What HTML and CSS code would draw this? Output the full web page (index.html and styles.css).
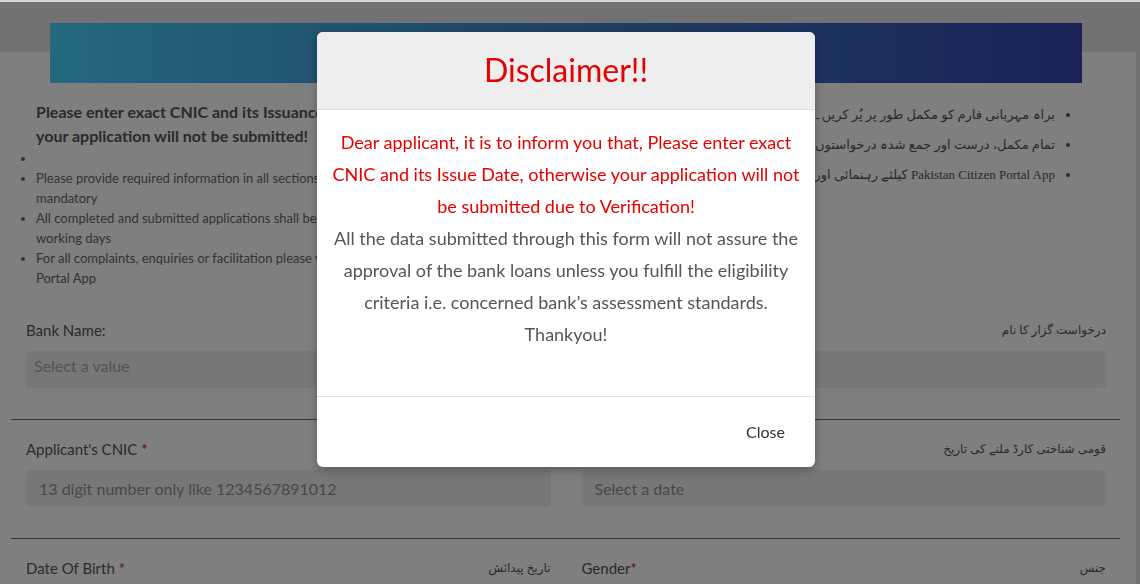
FILE: index.html
```html
<!DOCTYPE html>
<html>

<head>
	<meta charset="utf-8">
	<title>Loan application</title>
	<link rel="stylesheet" href="styles.css">
</head>

<body>

	<div class="page">
		<header class="banner"></header>

		<section class="notes">
			<div class="notesEn">
				<p class="warning">Please enter exact CNIC and its Issuance Date, otherwise<br>your application will not be submitted!</p>
				<ul>
					<li></li>
					<li>Please provide required information in all sections, fields marked with * are<br>mandatory</li>
					<li>All completed and submitted applications shall be processed within 30<br>working days</li>
					<li>For all complaints, enquiries or facilitation please visit Pakistan Citizen<br>Portal App</li>
				</ul>
			</div>
			<div class="notesUr" dir="rtl">
				<ul>
					<li>براہ مہربانی فارم کو مکمل طور پر پُر کریں۔ تمام خانے پُر کرنا لازمی ہیں</li>
					<li>تمام مکمل، درست اور جمع شدہ درخواستوں پر فیصلہ تیس دن میں کیا جائے گا</li>
					<li>Pakistan Citizen Portal App کیلئے رہنمائی اور معلومات حاصل کریں</li>
				</ul>
			</div>
		</section>

		<form class="form">
			<div class="field wide">
				<div class="label"><span>Bank Name:</span><span class="ur">درخواست گزار کا نام</span></div>
				<div class="select">Select a value</div>
			</div>

			<hr>

			<div class="field">
				<div class="label"><span>Applicant's CNIC <b>*</b></span></div>
				<div class="input">13 digit number only like 1234567891012</div>
			</div>
			<div class="field">
				<div class="label"><span>CNIC Issue Date <b>*</b></span><span class="ur">قومی شناختی کارڈ ملنے کی تاریخ</span></div>
				<div class="input">Select a date</div>
			</div>

			<hr>

			<div class="field">
				<div class="label"><span>Date Of Birth <b>*</b></span><span class="ur">تاریخ پیدائش</span></div>
				<div class="input"></div>
			</div>
			<div class="field">
				<div class="label"><span>Gender<b>*</b></span><span class="ur">جنس</span></div>
				<div class="input"></div>
			</div>
		</form>
	</div>

	<div class="backdrop"></div>

	<div class="modal">
		<div class="modalHeader">
			<h2>Disclaimer!!</h2>
		</div>
		<div class="modalBody">
			<p class="red">Dear applicant, it is to inform you that, Please enter exact CNIC and its Issue Date, otherwise your application will not be submitted due to Verification!</p>
			<p>All the data submitted through this form will not assure the approval of the bank loans unless you fulfill the eligibility criteria i.e. concerned bank’s assessment standards. Thankyou!</p>
		</div>
		<div class="modalFooter">
			<button type="button">Close</button>
		</div>
	</div>

</body>

</html>
```

FILE: styles.css
```css
body {
	margin: 0;
	border-top: 2px solid #d6d6d6;
	background-color: #e4e4e4;
	font-family: Lato, "Liberation Sans", sans-serif;
	color: #555;
	overflow: hidden;
}

.page {
	width: 1136px;
	background: linear-gradient(#e4e4e4 50px, #fff 50px);
	padding-top: 21px;
	padding-bottom: 40px;
}

.banner {
	height: 60px;
	margin: 0 54px 0 50px;
	background: linear-gradient(to right, #48d2ff, #3e7cc4 55%, #3444ae);
}

/* notes */

.notes {
	display: grid;
	grid-template-columns: 1fr 1fr;
	gap: 31px;
	padding: 0 30px 0 26px;
	margin-top: 17px;
}

.warning {
	margin: 0;
	padding-left: 10px;
	font-weight: bold;
	font-size: 16px;
	line-height: 24px;
	color: #555;
}

.notesEn ul {
	margin: 0;
	padding-left: 10px;
	font-size: 13px;
	line-height: 20px;
	color: #666;
}

.notesUr ul {
	margin: 0;
	padding-right: 51px;
	font-family: "Liberation Serif", "DejaVu Sans", serif;
	font-size: 13px;
	line-height: 30px;
	color: #555;
	white-space: nowrap;
}

/* form */

.form {
	display: grid;
	grid-template-columns: 1fr 1fr;
	column-gap: 31px;
	padding: 0 30px 0 26px;
	margin-top: 32px;
}

.field.wide {
	grid-column: span 2;
}

.label {
	display: flex;
	justify-content: space-between;
	align-items: center;
	height: 20px;
	font-size: 15px;
	color: #555;
	margin-bottom: 11px;
}

.label b {
	color: #d00;
	font-weight: normal;
}

.ur {
	font-family: "Liberation Serif", "DejaVu Sans", serif;
	font-size: 12px;
}

.select,
.input {
	height: 37px;
	line-height: 37px;
	background-color: #eee;
	border-radius: 4px;
	font-size: 16px;
}

.select {
	padding-left: 8px;
	line-height: 30px;
	color: #a8a8a8;
}

.input {
	padding-left: 13px;
	color: #929292;
}

.form hr {
	grid-column: span 2;
	border: 0;
	border-top: 1px solid #6a6a6a;
	margin: 31px -14px 19px -15px;
}

/* modal */

.backdrop {
	position: fixed;
	top: 2px;
	left: 0;
	right: 0;
	bottom: 0;
	background-color: rgba(0, 0, 0, .5);
}

.modal {
	position: fixed;
	top: 32px;
	left: 317px;
	width: 498px;
	background-color: #fff;
	border-radius: 6px;
	box-shadow: 0 3px 9px rgba(0, 0, 0, .3);
	overflow: hidden;
}

.modalHeader {
	background-color: #eee;
	border-bottom: 1px solid #e2e2e2;
	padding: 21px 15px 23px;
	text-align: center;
}

.modalHeader h2 {
	margin: 0;
	font-size: 32px;
	line-height: 33px;
	font-weight: normal;
	color: #e60000;
}

.modalBody {
	padding: 16px 15px 46px;
	text-align: center;
	font-size: 18px;
	line-height: 32px;
	color: #555;
}

.modalBody p {
	margin: 0;
}

.modalBody .red {
	color: #e60000;
}

.modalFooter {
	border-top: 1px solid #e2e2e2;
	padding: 17px 18px;
	text-align: right;
}

.modalFooter button {
	border: 0;
	background: none;
	font-family: Lato, "Liberation Sans", sans-serif;
	font-size: 16px;
	line-height: 20px;
	padding: 8px 12px;
	color: #333;
}
```
